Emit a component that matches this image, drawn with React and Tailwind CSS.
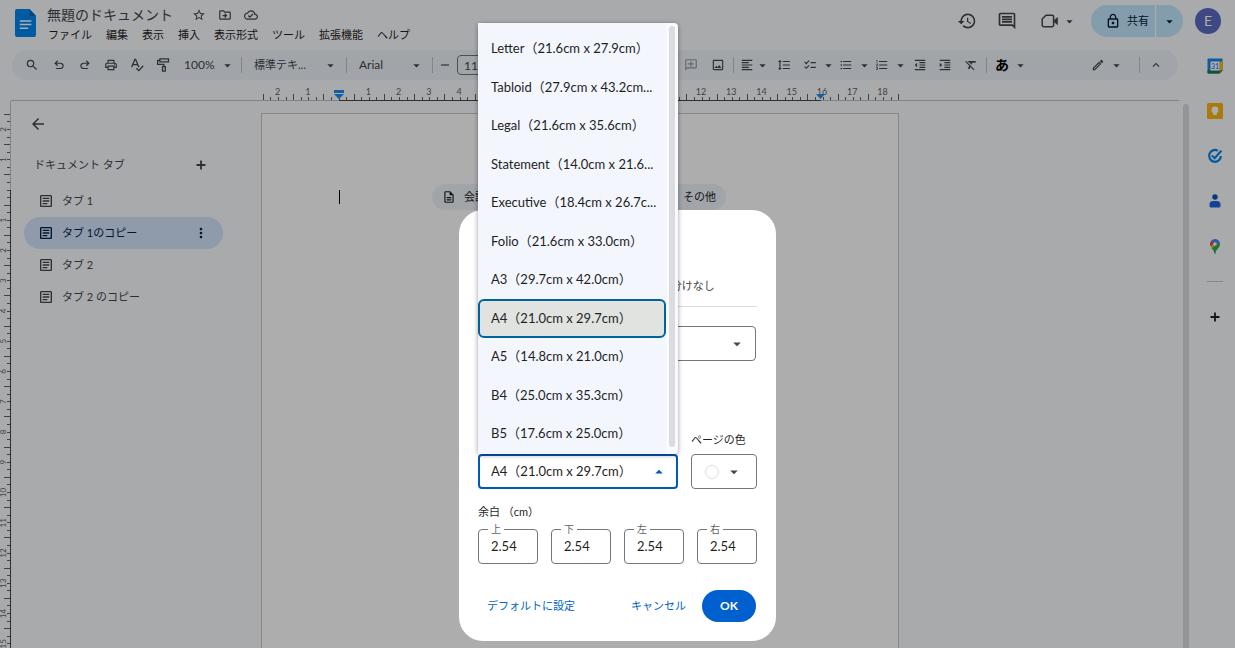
import clsx from 'clsx'
import {
  MdAdd, MdArrowBack, MdArrowDropDown, MdArrowDropUp, MdChecklist, MdFormatAlignLeft,
  MdFormatBold, MdFormatClear, MdFormatColorText, MdFormatIndentDecrease, MdFormatIndentIncrease,
  MdFormatItalic, MdFormatLineSpacing, MdFormatListBulleted, MdFormatListNumbered,
  MdFormatUnderlined, MdHistory, MdKeyboardArrowUp, MdLink, MdMoreVert, MdOutlineAddComment,
  MdOutlineArticle, MdOutlineCloudDone, MdOutlineDescription, MdOutlineDriveFileMove,
  MdOutlineEdit, MdOutlineImage, MdOutlineInsertComment, MdOutlineLock, MdOutlinePrint,
  MdRemove, MdSearch, MdStarBorder,
} from 'react-icons/md'

const menus = ['ファイル', '編集', '表示', '挿入', '表示形式', 'ツール', '拡張機能', 'ヘルプ']

const docTabs = [
  { label: 'タブ 1' },
  { label: 'タブ 1のコピー', active: true },
  { label: 'タブ 2' },
  { label: 'タブ 2 のコピー' },
]

const paperSizes = [
  'Letter（21.6cm x 27.9cm）',
  'Tabloid（27.9cm x 43.2cm...',
  'Legal（21.6cm x 35.6cm）',
  'Statement（14.0cm x 21.6...',
  'Executive（18.4cm x 26.7c...',
  'Folio（21.6cm x 33.0cm）',
  'A3（29.7cm x 42.0cm）',
  'A4（21.0cm x 29.7cm）',
  'A5（14.8cm x 21.0cm）',
  'B4（25.0cm x 35.3cm）',
  'B5（17.6cm x 25.0cm）',
]
const selectedSize = 'A4（21.0cm x 29.7cm）'

const margins = ['上', '下', '左', '右']

const CM = 30.25

function UndoIcon({ className }) {
  return (
    <svg viewBox="0 -960 960 960" fill="currentColor" className={clsx('size-3.5', className)}>
      <path d="M280-200v-80h284q63 0 109.5-40T720-420q0-60-46.5-100T564-560H312l104 104-56 56-200-200 200-200 56 56-104 104h252q97 0 169.5 63T800-420q0 94-72.5 157T564-200H280Z" />
    </svg>
  )
}

function SpellIcon() {
  return (
    <svg viewBox="0 0 14 14" fill="none" stroke="currentColor" strokeWidth="1.3" className="size-3.5">
      <path d="M1.6 9.2 4.9 1.3h.7l3.3 7.9M2.8 6.7h4.9M6.4 10.2l2.4 2.4 4.4-4.8" />
    </svg>
  )
}

function PaintIcon() {
  return (
    <svg viewBox="0 0 14 14" fill="none" stroke="currentColor" strokeWidth="1.3" className="size-3.5">
      <path d="M3.9.9h8.6v3H3.9zM3.9 2.4H1.6v3.9h6.3v2.3M6.5 8.6h2.8v4.6H6.5z" />
    </svg>
  )
}

function MeetIcon() {
  return (
    <svg viewBox="0 0 18 14" className="h-3.5 w-[18px]">
      <path d="M5 1.3h6.2a1.4 1.4 0 0 1 1.4 1.4v8.6a1.4 1.4 0 0 1-1.4 1.4H2.6a1.4 1.4 0 0 1-1.4-1.4V5z" fill="none" stroke="currentColor" strokeWidth="1.5" strokeLinejoin="round" />
      <path d="M13.2 6 16.8 3v8.2L13.2 8.2z" fill="currentColor" />
    </svg>
  )
}

function DocsLogo() {
  return (
    <svg viewBox="0 0 21 28" className="h-7 w-[21px]">
      <path d="M2 0h12.5L21 7v19a2 2 0 0 1-2 2H2a2 2 0 0 1-2-2V2a2 2 0 0 1 2-2z" fill="#0086f0" />
      <path d="M14.5 0 21 7h-5a1.5 1.5 0 0 1-1.5-1.5z" fill="#0069c0" />
      <path d="M4.8 12h11.6M4.8 15.6h11.6M4.8 19.2h8.4" stroke="#fff" strokeWidth="1.5" />
    </svg>
  )
}

function CalendarIcon() {
  return (
    <svg viewBox="0 0 16 16" className="size-4">
      <path d="M1.5.5H15.5V13l-3 2.5h-11a1 1 0 0 1-1-1v-13a1 1 0 0 1 1-1z" fill="#1a86e8" />
      <path d="M12.5 3.5h3v9h-3z" fill="#fbbc04" />
      <path d="M.5 12.5h12v3h-11a1 1 0 0 1-1-1z" fill="#188038" />
      <path d="M12.5 12.5h3l-3 3z" fill="#ea4335" />
      <path d="M3.5 3.5h9v9h-9z" fill="#fff" />
      <text x="8" y="10.5" textAnchor="middle" fontSize="7" fontWeight="700" fill="#4285f4">31</text>
    </svg>
  )
}

function KeepIcon() {
  return (
    <svg viewBox="0 0 16 16" className="size-4">
      <rect width="16" height="16" rx="1.5" fill="#fbb416" />
      <circle cx="8" cy="7" r="3.4" fill="#fff" />
      <path d="M6.3 9h3.4v3H6.3z" fill="#fff" />
    </svg>
  )
}

function TasksIcon() {
  return (
    <svg viewBox="0 0 16 16" fill="none" className="size-4">
      <path d="M10.8 2.7A5.9 5.9 0 1 0 13.9 8" stroke="#0b84e3" strokeWidth="2.2" />
      <path d="m4.9 7.5 2.7 2.7 6.8-7.4" stroke="#0b84e3" strokeWidth="2.2" />
    </svg>
  )
}

function ContactsIcon() {
  return (
    <svg viewBox="0 0 16 16" className="size-4">
      <circle cx="8" cy="4" r="2.7" fill="#0b50c0" />
      <path d="M2.5 11.5A3.5 3.5 0 0 1 6 8h4a3.5 3.5 0 0 1 3.5 3.5V13a1.5 1.5 0 0 1-1.5 1.5H4A1.5 1.5 0 0 1 2.5 13z" fill="#1a62e0" />
    </svg>
  )
}

function MapsIcon() {
  return (
    <svg viewBox="0 0 16 16" className="size-4">
      <path d="M13 6c0 4-4 5-4.4 9.3a.6.6 0 0 1-1.2 0C7.2 13 5.8 11.6 4.6 10l7.8-6.5A5 5 0 0 1 13 6z" fill="#34a853" />
      <path d="M4.6 10A7.5 7.5 0 0 1 3 6l3-1 4 1z" fill="#fbbc04" />
      <path d="M3 6a5 5 0 0 1 1.2-3.3L7 5 4 8.5A6 6 0 0 1 3 6z" fill="#ea4335" />
      <path d="M4.2 2.7a5 5 0 0 1 8.2.8L9 7.5z" fill="#4285f4" />
      <circle cx="8" cy="6" r="1.8" fill="#fff" />
    </svg>
  )
}

function PlusIcon() {
  return (
    <svg viewBox="0 0 16 16" stroke="currentColor" strokeWidth="1.8" className="size-4">
      <path d="M8 3.500v9M3.500 8h9" />
    </svg>
  )
}

function Caret() {
  return <MdArrowDropDown className="size-[15px] shrink-0" />
}

function Divider({ className }) {
  return <span className={clsx('h-4 w-px shrink-0 bg-[#c0c4c9]', className)} />
}

function Tool({ icon: Icon, label, className }) {
  return (
    <button type="button" aria-label={label} className={clsx('flex shrink-0 items-center justify-center', className || 'w-[26px]')}>
      <Icon className="size-3.5" />
    </button>
  )
}

function MenuTool({ icon: Icon, label, className }) {
  return (
    <button type="button" aria-label={label} className={clsx('flex shrink-0 items-center', className)}>
      <Icon className="size-3.5 shrink-0" />
      <Caret />
    </button>
  )
}

function Header() {
  return (
    <header className="flex h-[50px] shrink-0 items-start justify-between pr-3.5 pl-[15px] text-[#444746]">
      <div className="flex gap-[11px] pt-[9px]">
        <DocsLogo />
        <div className="-mt-1">
          <div className="flex h-5 items-center">
            <h1 className="text-sm text-[#444746]">無題のドキュメント</h1>
            <div className="ml-[19px] flex items-center gap-3">
              <button type="button" aria-label="スター"><MdStarBorder className="size-3.5" /></button>
              <button type="button" aria-label="移動"><MdOutlineDriveFileMove className="size-3.5" /></button>
              <button type="button" aria-label="保存状況"><MdOutlineCloudDone className="size-3.5" /></button>
            </div>
          </div>
          <nav className="flex h-5 items-center gap-3.5 pl-px text-[#1f1f1f]">
            {menus.map((menu) => (
              <button key={menu} type="button">{menu}</button>
            ))}
          </nav>
        </div>
      </div>

      <div className="flex items-center pt-[5px]">
        <button type="button" aria-label="変更履歴" className="w-10 pl-2"><MdHistory className="size-5" /></button>
        <button type="button" aria-label="コメント" className="w-10 pl-2"><MdOutlineInsertComment className="size-5" /></button>
        <button type="button" aria-label="会議" className="flex w-12 items-center justify-between pl-3">
          <MeetIcon />
          <Caret />
        </button>
        <div className="ml-3.5 flex h-8 overflow-hidden rounded-full bg-[#c2e7ff] text-[#001d35]">
          <button type="button" className="flex w-[65px] items-center gap-1.5 border-r border-white pl-3.5">
            <MdOutlineLock className="size-4" />
            共有
          </button>
          <button type="button" aria-label="共有オプション" className="flex w-[27px] items-center justify-center"><Caret /></button>
        </div>
        <button type="button" className="ml-3 size-[26px] rounded-full bg-[#5c6bc0] text-sm text-white">E</button>
      </div>
    </header>
  )
}

function Toolbar() {
  return (
    <div className="ml-3 mr-[11px] flex h-[30px] shrink-0 items-center rounded-full bg-[#edf2fa] px-1.5 text-[#444746]">
      <Tool icon={MdSearch} label="検索" className="w-7" />
      <Tool icon={UndoIcon} label="元に戻す" />
      <button type="button" aria-label="やり直す" className="flex w-[26px] shrink-0 justify-center"><UndoIcon className="-scale-x-100" /></button>
      <Tool icon={MdOutlinePrint} label="印刷" />
      <Tool icon={SpellIcon} label="スペルチェック" />
      <Tool icon={PaintIcon} label="書式を貼り付け" />
      <button type="button" className="flex w-[65px] shrink-0 items-center justify-between pr-1.5 pl-2 text-xs">100%<Caret /></button>
      <Divider />
      <button type="button" className="flex w-[104px] shrink-0 items-center justify-between pr-2 pl-3">標準テキ...<Caret /></button>
      <Divider />
      <button type="button" className="flex w-[85px] shrink-0 items-center justify-between pr-2 pl-3 text-xs">Arial<Caret /></button>
      <Divider />
      <Tool icon={MdRemove} label="縮小" className="w-6" />
      <input aria-label="フォントサイズ" defaultValue="11" className="h-5 w-7 shrink-0 rounded-sm border border-[#747775] text-center text-xs" />
      <Tool icon={MdAdd} label="拡大" className="w-6" />
      <Tool icon={MdFormatBold} label="太字" className="w-7" />
      <Tool icon={MdFormatItalic} label="斜体" className="w-7" />
      <Tool icon={MdFormatUnderlined} label="下線" className="w-7" />
      <Tool icon={MdFormatColorText} label="文字色" className="w-7" />
      <Tool icon={MdOutlineEdit} label="ハイライト" className="w-7" />
      <Tool icon={MdLink} label="リンク" className="w-7" />
      <button type="button" aria-label="コメントを追加" className="flex w-7 shrink-0 justify-center text-[#444746]/50"><MdOutlineAddComment className="size-3.5 -scale-x-100" /></button>
      <Tool icon={MdOutlineImage} label="画像" />
      <Divider className="ml-0.5" />
      <MenuTool icon={MdFormatAlignLeft} label="配置" className="w-[38px] gap-px pl-1.5" />
      <Tool icon={MdFormatLineSpacing} label="行間" className="w-6" />
      <MenuTool icon={MdChecklist} label="チェックリスト" className="w-10 gap-1 pl-[7px]" />
      <MenuTool icon={MdFormatListBulleted} label="箇条書き" className="w-9 gap-1 pl-[3px]" />
      <MenuTool icon={MdFormatListNumbered} label="番号付きリスト" className="w-9 gap-1 pl-[3px]" />
      <Tool icon={MdFormatIndentDecrease} label="インデント減" className="w-6" />
      <Tool icon={MdFormatIndentIncrease} label="インデント増" />
      <Tool icon={MdFormatClear} label="書式をクリア" />
      <Divider className="ml-0.5" />
      <button type="button" aria-label="入力ツール" className="flex shrink-0 items-center gap-1 pl-2">
        <span className="text-sm font-bold text-black">あ</span>
        <Caret />
      </button>
      <div className="flex-1" />
      <MenuTool icon={MdOutlineEdit} label="編集モード" className="w-12 gap-1" />
      <Divider />
      <Tool icon={MdKeyboardArrowUp} label="メニューを非表示" className="w-8" />
    </div>
  )
}

function HorizontalRuler() {
  const origin = 77
  const ticks = Array.from({ length: 85 }, (_, i) => i - 10)
  return (
    <svg width="638" height="21" fontSize="9" className="shrink-0">
      <path d={`M${origin} 20.5H559`} stroke="#444746" />
      {ticks.map((q) => (
        <path key={q} d={`M${Math.floor(origin + (q * CM) / 4) + 0.5} ${Math.abs(q % 4) === 2 ? 14 : 17}V20`} stroke="#5f6368" />
      ))}
      {Array.from({ length: 21 }, (_, i) => i - 2).filter((n) => n !== 0).map((n) => (
        <text key={n} x={origin + n * CM - 1} y="15" textAnchor="middle" fill="#5f6368">{Math.abs(n)}</text>
      ))}
      <path d="M72 10h10v3H72zM72 14h10l-5 5z" fill="#1a8cf5" />
      <path d="M554 14h9l-4.5 5z" fill="#1a8cf5" />
    </svg>
  )
}

function VerticalRuler() {
  const origin = 89
  const ticks = Array.from({ length: 73 }, (_, i) => i - 10)
  return (
    <svg width="11" height="547" fontSize="8" className="shrink-0">
      <path d="M10.5 0V89" stroke="#c0c4c9" />
      <path d="M10.5 89V547" stroke="#444746" />
      {ticks.map((q) => (
        <path key={q} d={`M${Math.abs(q % 4) === 2 ? 4 : 7} ${Math.floor(origin + (q * CM) / 4) + 0.5}H10`} stroke="#5f6368" />
      ))}
      {Array.from({ length: 18 }, (_, i) => i - 2).filter((n) => n !== 0).map((n) => (
        <text key={n} transform={`translate(6 ${origin + n * CM}) rotate(-90)`} textAnchor="middle" fill="#5f6368">{Math.abs(n)}</text>
      ))}
    </svg>
  )
}

function DocTabs() {
  return (
    <aside className="w-[250px] shrink-0 pt-3.5 pl-[13px] text-[#444746]">
      <button type="button" aria-label="戻る" className="block pl-[5px]"><MdArrowBack className="size-[18px]" /></button>
      <div className="mt-[23px] flex h-[18px] w-[199px] items-center justify-between pr-3.5 pl-2.5">
        <h2>ドキュメント タブ</h2>
        <button type="button" aria-label="タブを追加"><PlusIcon /></button>
      </div>
      <ul className="mt-[11px] w-[199px]">
        {docTabs.map(({ label, active }) => (
          <li key={label} className={clsx('flex h-8 items-center rounded-full px-3.5', active && 'bg-[#d3e3fd] text-[#041e49]')}>
            <button type="button" className="flex flex-1 items-center gap-2">
              <MdOutlineArticle className="size-4" />
              {label}
            </button>
            {active && <button type="button" aria-label="その他の操作"><MdMoreVert className="size-4" /></button>}
          </li>
        ))}
      </ul>
    </aside>
  )
}

function Chip({ children, className }) {
  return (
    <button type="button" className={clsx('flex h-[26px] items-center gap-2 rounded-full bg-[#edf2fa] px-2.5 whitespace-nowrap text-[#1f1f1f]', className)}>
      <MdOutlineDescription className="size-3.5 shrink-0" />
      {children}
    </button>
  )
}

function Page() {
  return (
    <main className="mt-3 w-[638px] shrink-0 border border-b-0 border-[#c7c7c7] bg-white pt-[70px] pl-[77px]">
      <div className="flex items-center">
        <span className="h-3.5 w-px bg-black" />
        <Chip className="ml-[92px]">会議メモ</Chip>
        <Chip className="ml-[7px]">メールの下書き</Chip>
        <Chip className="ml-[7px]">その他</Chip>
      </div>
    </main>
  )
}

function SidePanel() {
  return (
    <aside className="flex w-[46px] shrink-0 flex-col items-center gap-[29px] pt-2 pl-1.5">
      <button type="button" aria-label="カレンダー"><CalendarIcon /></button>
      <button type="button" aria-label="Keep"><KeepIcon /></button>
      <button type="button" aria-label="ToDo リスト"><TasksIcon /></button>
      <button type="button" aria-label="連絡先"><ContactsIcon /></button>
      <button type="button" aria-label="マップ"><MapsIcon /></button>
      <hr className="-mt-0.5 w-4 border-[#c7c7c7]" />
      <button type="button" aria-label="アドオンを取得" className="-mt-0.5 text-[#1f1f1f]"><PlusIcon /></button>
    </aside>
  )
}

function PaperSizeList() {
  return (
    <div className="absolute bottom-full left-0 flex h-[431px] w-full gap-[3px] rounded-sm bg-[#f8fafd] pr-[3px] shadow-[0_1px_5px_rgba(0,0,0,0.4)]">
      <ul role="listbox" aria-label="用紙サイズ" className="flex min-w-0 flex-1 flex-col bg-[#f3f6fd] pt-[7px] pb-px">
        {paperSizes.map((size) => (
          <li
            key={size}
            role="option"
            aria-selected={size === selectedSize}
            className={clsx(
              'flex min-h-0 flex-1 items-center border-2 pl-[11px] whitespace-nowrap',
              size === selectedSize ? 'rounded-md border-[#00639b] bg-[#e1e3e1]' : 'border-transparent'
            )}
          >
            {size}
          </li>
        ))}
      </ul>
      <span className="mt-[3px] mb-[7px] w-1.5 rounded-full bg-[#dadce0]" />
    </div>
  )
}

function PageSetupDialog() {
  return (
    <div role="dialog" aria-label="ページ設定" className="flex h-[431px] w-[317px] flex-col rounded-3xl bg-white px-[19px] text-[#1f1f1f]">
      <h2 className="mt-5 h-6 text-base">ページ設定</h2>
      <div role="tablist" className="mt-[13px] flex h-10 gap-6 border-b border-[#dadce0] pl-[68px] text-[#444746]">
        <button type="button" role="tab" aria-selected="true" className="w-[68px]">ページあり</button>
        <button type="button" role="tab" aria-selected="false">ページ分けなし</button>
      </div>

      <div className="relative mt-[19px] flex items-center">
        <select aria-label="適用先" className="h-[35px] w-[278px] appearance-none rounded-sm border border-[#747775] px-3">
          <option>このタブ</option>
        </select>
        <MdArrowDropDown className="pointer-events-none absolute right-[11px] size-[18px] text-[#444746]" />
      </div>

      <fieldset className="mt-3 flex h-[50px] items-center gap-4">
        <label className="flex items-center gap-2"><input type="radio" name="orientation" defaultChecked />縦</label>
        <label className="flex items-center gap-2"><input type="radio" name="orientation" />横</label>
      </fieldset>

      <div className="mt-[9px] flex gap-[13px]">
        <div className="flex w-[200px] flex-col gap-1.5">
          <label htmlFor="paper" className="leading-4">用紙サイズ</label>
          <div className="relative flex items-center">
            <select id="paper" defaultValue={selectedSize} className="h-[35px] w-full appearance-none rounded-sm border-2 border-[#0058b8] px-[11px] text-[13px]">
              {paperSizes.map((size) => <option key={size}>{size}</option>)}
            </select>
            <MdArrowDropUp className="pointer-events-none absolute right-2.5 size-[18px] text-[#0058b8]" />
            <div className="absolute inset-0 text-[13px]"><PaperSizeList /></div>
          </div>
        </div>
        <div className="flex flex-1 flex-col gap-1.5">
          <span id="page-color" className="leading-4 whitespace-nowrap">ページの色</span>
          <button type="button" aria-labelledby="page-color" className="flex h-[35px] items-center gap-1.5 rounded-sm border border-[#747775] pl-[13px] text-[#444746]">
            <span className="size-3.5 rounded-full border border-[#dadce0]" />
            <MdArrowDropDown className="size-[18px]" />
          </button>
        </div>
      </div>

      <h3 className="mt-[15px] h-4 leading-4">余白 （cm）</h3>
      <div className="mt-[9px] flex justify-between">
        {margins.map((side) => (
          <label key={side} className="relative">
            <span className="absolute -top-2 left-2.5 bg-white px-[3px] text-[10px] leading-4 text-[#5f6368]">{side}</span>
            <input defaultValue="2.54" className="h-[35px] w-[60px] rounded-sm border border-[#747775] pb-0.5 pl-3 text-[13px]" />
          </label>
        ))}
      </div>

      <div className="mt-[26px] flex items-center text-[#0062c4]">
        <button type="button" className="pl-[9px]">デフォルトに設定</button>
        <button type="button" className="mr-4 ml-auto">キャンセル</button>
        <button type="button" className="mr-px h-8 w-[54px] rounded-full bg-[#0060cf] text-xs font-bold text-white">OK</button>
      </div>
    </div>
  )
}

export default function App() {
  return (
    <div className="flex h-screen flex-col overflow-hidden bg-[#f9fbfd] font-[Lato,'Noto_Sans_CJK_JP',sans-serif] text-[11px]">
      <Header />
      <div className="flex min-h-0 flex-1">
        <div className="flex min-w-0 flex-1 flex-col">
          <Toolbar />
          <div className="mr-2.5 ml-[11px] flex h-[21px] shrink-0 border-b border-[#c0c4c9] pl-[251px]">
            <HorizontalRuler />
          </div>
          <div className="flex min-h-0 flex-1">
            <VerticalRuler />
            <DocTabs />
            <Page />
            <span className="mt-[3px] ml-auto w-1.5 rounded-t-full bg-[#dadce0]" />
          </div>
        </div>
        <SidePanel />
      </div>

      <div className="fixed inset-0 flex items-end justify-center bg-black/32 pb-[7px]">
        <PageSetupDialog />
      </div>
    </div>
  )
}
